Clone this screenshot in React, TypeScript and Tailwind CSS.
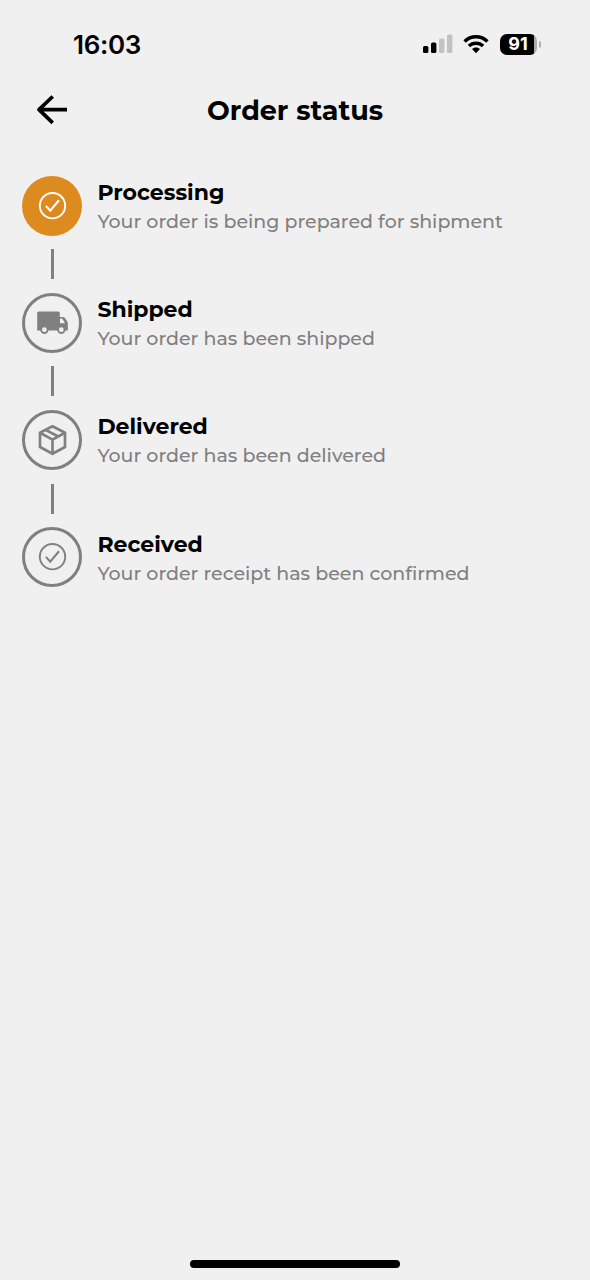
type IconKind = "check" | "truck" | "box";

type Step = { title: string; text: string; icon: IconKind; active?: boolean };

const steps: Step[] = [
  { title: "Processing", text: "Your order is being prepared for shipment", icon: "check", active: true },
  { title: "Shipped", text: "Your order has been shipped", icon: "truck" },
  { title: "Delivered", text: "Your order has been delivered", icon: "box" },
  { title: "Received", text: "Your order receipt has been confirmed", icon: "check" },
];

function StepIcon({ kind }: { kind: IconKind }) {
  if (kind === "truck") {
    return (
      <svg className="size-[32px]" viewBox="-0.4 0.3 32 32" fill="none">
        <path fill="currentColor" fillRule="evenodd" d="M2.300 4.800H21.900a1.500 1.500 0 0 1 1.500 1.500V10.200H26.200c1 0 1.800.4 2.400 1.200l2.200 3.200c.4.600.6 1.200.6 1.900v7.300H.8V6.300a1.500 1.500 0 0 1 1.500-1.500ZM23.600 11.900v4.600h5l-2.200-3.700c-.4-.6-.8-.9-1.500-.9Z" />
        <circle cx="8" cy="23" r="3.300" fill="#f0f0f0" stroke="currentColor" strokeWidth="1.800" />
        <circle cx="24.900" cy="23" r="3.300" fill="#f0f0f0" stroke="currentColor" strokeWidth="1.800" />
      </svg>
    );
  }
  if (kind === "box") {
    return (
      <svg className="size-[32px]" viewBox="-0.500 0 32 32" fill="none" stroke="currentColor" strokeWidth="2.700" strokeLinejoin="round">
        <path d="M16 2.300 28.500 8.800V23L16 29.800 3.500 23V8.800ZM3.500 8.800 16 15.600 28.500 8.800M16 15.600V29.800M9 5.900 21.800 12.500" />
      </svg>
    );
  }
  return (
    <svg className="size-[32px]" viewBox="-0.500 0.3 32 32" fill="none" stroke="currentColor" strokeWidth="1.900">
      <circle cx="16" cy="16" r="12.700" />
      <path strokeWidth="2.100" d="M9.400 16.200 13.700 20.900 22.500 10.500" />
    </svg>
  );
}

function StatusBar() {
  return (
    <div className="flex h-[88px] items-center justify-between pr-[49px] pl-[73px] font-['Inter',sans-serif]">
      <span className="pt-px text-[26px] leading-none font-semibold tracking-[-0.3px]">16:03</span>
      <div className="flex items-center">
        <svg className="h-[20px] w-[30px]" viewBox="0 0 30 20">
          <rect x="0" y="12" width="5.4" height="7" rx="1.5" />
          <rect x="8" y="8.5" width="5.4" height="10.5" rx="1.5" />
          <rect x="16" y="4.5" width="5.4" height="14.500" rx="1.5" fill="#c2c2c2" />
          <rect x="24" y="0.5" width="5.4" height="18.500" rx="1.5" fill="#c2c2c2" />
        </svg>
        <svg className="ml-[10px] h-[19px] w-[26px]" viewBox="0 0 26 19">
          <path d="M13 0C8 0 3.600 1.900.4 5.200l2.400 2.500C5.500 5 9.100 3.500 13 3.500s7.500 1.500 10.200 4.200l2.400-2.500C22.400 1.900 18 0 13 0Z" />
          <path d="M13 6.400c-3.200 0-6.100 1.200-8.300 3.300l2.500 2.500c1.600-1.500 3.600-2.300 5.800-2.300s4.200.8 5.800 2.300l2.500-2.500C19.100 7.600 16.200 6.400 13 6.400Z" />
          <path d="M13 12.500c-1.600 0-3 .6-4 1.500l4 4.300 4-4.300c-1-.9-2.400-1.500-4-1.500Z" />
        </svg>
        <div className="ml-[11px] flex h-[21px] w-[37px] items-center justify-center rounded-[7px] bg-[linear-gradient(90deg,#000_34px,#aaa_34px)] pr-px text-[18px] leading-none font-bold text-white">91</div>
        <div className="ml-[2px] h-[7px] w-[2px] rounded-r-full bg-[#b0b0b0]" />
      </div>
    </div>
  );
}

export default function App() {
  return (
    <main className="flex h-[1280px] w-[590px] flex-col bg-[#f0f0f0] font-['Montserrat','Inter',sans-serif] text-black">
      <StatusBar />
      <header className="grid h-[44px] grid-cols-[1fr_auto_1fr] items-center">
        <svg className="ml-[36px] size-[32px]" viewBox="0 0 32 32" fill="none" stroke="currentColor" strokeWidth="3.700" strokeLinejoin="round">
          <path d="M16.700 2.500 3 15.700 16.700 28.900M3 15.700H31" />
        </svg>
        <h1 className="text-[27px] leading-none font-bold">Order status</h1>
        <span />
      </header>
      <ol className="mt-[43.600px] ml-[22.400px]">
        {steps.map((s) => (
          <li key={s.title} className="group">
            <div className="flex h-[60px]">
              <div className={s.active ? "flex size-[60px] items-center justify-center rounded-full bg-[#dd8a1e] text-white" : "flex size-[60px] items-center justify-center rounded-full border-3 border-[#808080] text-[#808080]"}>
                <StepIcon kind={s.icon} />
              </div>
              <div className="ml-[15px] pt-[0.500px] whitespace-nowrap">
                <h2 className="text-[22px] leading-[33px] font-bold">{s.title}</h2>
                <p className="text-[19px] leading-[26px] font-medium text-[#808080]">{s.text}</p>
              </div>
            </div>
            <div className="my-[13.6px] ml-[28.600px] h-[30px] w-[3px] bg-[#808080] group-last:hidden" />
          </li>
        ))}
      </ol>
      <div className="mx-auto mt-auto mb-[12px] h-[8px] w-[210px] rounded-full bg-black" />
    </main>
  );
}
